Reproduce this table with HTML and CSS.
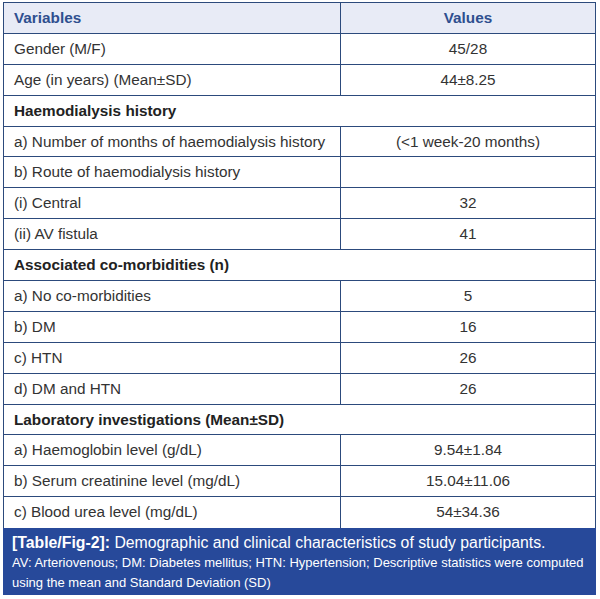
FILE: index.html
```html
<!DOCTYPE html>
<html>
<head>
<meta charset="utf-8">
<link rel="stylesheet" href="styles.css">
</head>
<body>
<div class="figure">
  <table class="data">
    <thead>
      <tr><th class="var">Variables</th><th class="val">Values</th></tr>
    </thead>
    <tbody>
      <tr><td>Gender (M/F)</td><td class="num">45/28</td></tr>
      <tr><td>Age (in years) (Mean±SD)</td><td class="num">44±8.25</td></tr>
      <tr class="section"><td colspan="2">Haemodialysis history</td></tr>
      <tr><td>a) Number of months of haemodialysis history</td><td class="num">(&lt;1 week-20 months)</td></tr>
      <tr><td>b) Route of haemodialysis history</td><td class="num"></td></tr>
      <tr><td>(i) Central</td><td class="num">32</td></tr>
      <tr><td>(ii) AV fistula</td><td class="num">41</td></tr>
      <tr class="section"><td colspan="2">Associated co-morbidities (n)</td></tr>
      <tr><td>a) No co-morbidities</td><td class="num">5</td></tr>
      <tr><td>b) DM</td><td class="num">16</td></tr>
      <tr><td>c) HTN</td><td class="num">26</td></tr>
      <tr><td>d) DM and HTN</td><td class="num">26</td></tr>
      <tr class="section"><td colspan="2">Laboratory investigations (Mean±SD)</td></tr>
      <tr><td>a) Haemoglobin level (g/dL)</td><td class="num">9.54±1.84</td></tr>
      <tr><td>b) Serum creatinine level (mg/dL)</td><td class="num">15.04±11.06</td></tr>
      <tr class="last"><td>c) Blood urea level (mg/dL)</td><td class="num">54±34.36</td></tr>
    </tbody>
  </table>
  <div class="caption">
    <p class="title"><b>[Table/Fig-2]:</b> Demographic and clinical characteristics of study participants.</p>
    <p class="note">AV: Arteriovenous; DM: Diabetes mellitus; HTN: Hypertension; Descriptive statistics were computed using the mean and Standard Deviation (SD)</p>
  </div>
</div>
</body>
</html>
```

FILE: styles.css
```css
html, body {
  margin: 0;
  padding: 0;
  background: #ffffff;
}

body {
  font-family: "Liberation Sans", Arial, sans-serif;
}

.figure {
  width: 593px;
  margin: 2px 0 0 3px;
}

.data {
  width: 593px;
  border-collapse: collapse;
  table-layout: fixed;
  font-size: 15.3px;
  color: #333333;
}

.data th,
.data td {
  border: 1px solid #2c4a7c;
  height: 30.9px;
  padding: 0 0 0 10px;
  vertical-align: middle;
  line-height: 18px;
  box-sizing: border-box;
}

.data th {
  background: #e8ebf6;
  color: #2f4f8f;
  font-weight: bold;
  text-align: left;
}

.data th.var {
  width: 337px;
}

.data th.val,
.data td.num {
  text-align: center;
  padding-left: 0;
}

.section td {
  font-weight: bold;
  color: #222222;
}

.last td {
  border-bottom: none;
}

.caption {
  background: #27499a;
  color: #ffffff;
  padding: 5px 9px 5px 9px;
  height: 67px;
  box-sizing: border-box;
}

.caption p {
  margin: 0;
}

.title {
  font-size: 15.8px;
  line-height: 20px;
}

.note {
  font-size: 13px;
  line-height: 20px;
}
```
